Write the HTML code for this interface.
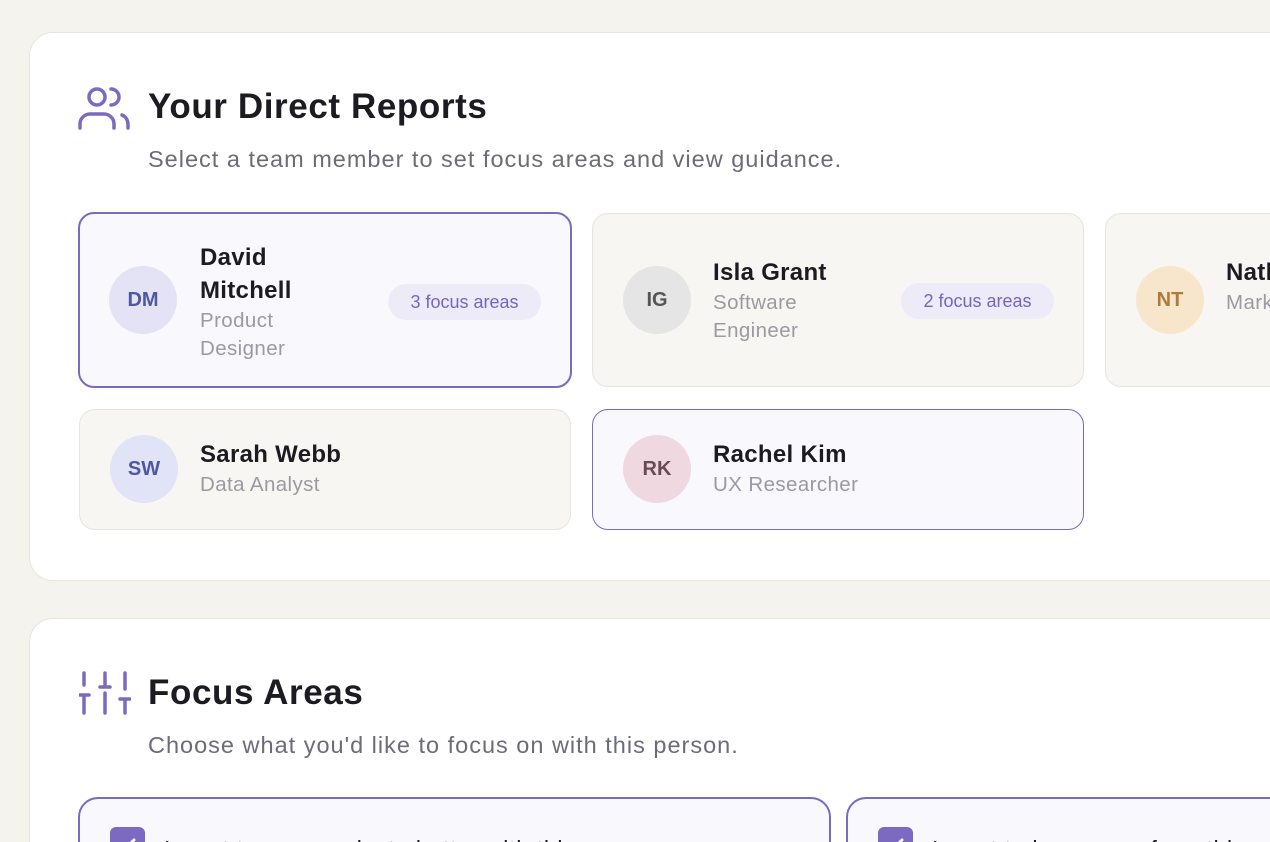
<!DOCTYPE html>
<html><head><meta charset="utf-8"><style>
*{box-sizing:border-box;margin:0;padding:0}
html,body{width:1270px;height:842px;overflow:hidden}
body{background:#f4f3ee;font-family:"Liberation Sans",sans-serif;position:relative;color:#1c1b22}
.card{position:absolute;left:29px;width:1300px;background:#fff;border:1px solid #e6e5df;border-radius:24px}
.h{position:absolute;left:148px;font-size:35px;font-weight:bold;letter-spacing:0.6px}
.sub{position:absolute;left:148px;font-size:23.5px;color:#6b6b7a;letter-spacing:1px}
.p{position:absolute;border-radius:16px;display:flex;align-items:center}
.av{position:absolute;left:30px;width:68px;height:68px;border-radius:50%;display:flex;align-items:center;justify-content:center;font-size:20px;font-weight:bold}
.nm{position:absolute;left:120px;font-size:24px;font-weight:bold;line-height:33px;letter-spacing:0.3px}
.rl{font-size:20.5px;font-weight:normal;color:#9b9aa3;line-height:28px;letter-spacing:0.4px}
.bd{position:absolute;height:36px;border-radius:18px;background:#eeebf8;color:#7565c0;font-size:18px;display:flex;align-items:center;justify-content:center}
.f{position:absolute;top:797px;height:80px;border:2px solid #7b6ac0;border-radius:20px;background:#f8f8fd}
.cb{position:absolute;left:30px;top:28px;width:35px;height:35px;border-radius:6px;background:#7b6ac0}
.ft{position:absolute;left:84px;top:37px;font-size:23px;white-space:nowrap;letter-spacing:0.7px}
</style></head><body>
<div class="card" style="top:32px;height:549px"></div>
<div class="card" style="top:618px;height:300px"></div>

<svg style="position:absolute;left:78px;top:86px" width="54" height="46" viewBox="0 0 54 46" fill="none" stroke="#7b6ac0" stroke-width="3.5" stroke-linecap="round">
<circle cx="19" cy="11" r="8"/><path d="M2 42v-4a10 10 0 0 1 10-10h14a10 10 0 0 1 10 10v4"/><path d="M33 3a8 8 0 0 1 0 16"/><path d="M44 29a10 10 0 0 1 6 9v4"/></svg>
<div class="h" style="top:87px">Your Direct Reports</div>
<div class="sub" style="top:146px">Select a team member to set focus areas and view guidance.</div>

<div class="p" style="left:78px;top:212px;width:494px;height:176px;background:#f8f8fd;border:2px solid #7b6ac0">
<div class="av" style="background:#e3e3f5;color:#4f56a3;left:29px">DM</div>
<div class="nm" style="top:27px">David<br>Mitchell<div class="rl">Product<br>Designer</div></div>
<div class="bd" style="left:308px;top:70px;width:153px">3 focus areas</div></div>

<div class="p" style="left:592px;top:213px;width:492px;height:174px;background:#f7f6f2;border:1px solid #e5e4df">
<div class="av" style="background:#e4e5e4;color:#555;">IG</div>
<div class="nm" style="top:42px">Isla Grant<div class="rl">Software<br>Engineer</div></div>
<div class="bd" style="left:308px;top:69px;width:153px">2 focus areas</div></div>

<div class="p" style="left:1105px;top:213px;width:300px;height:174px;background:#f7f6f2;border:1px solid #e5e4df">
<div class="av" style="background:#f8e6cc;color:#b07a3a;">NT</div>
<div class="nm" style="top:42px">Nathan<div class="rl">Marketing</div></div></div>

<div class="p" style="left:79px;top:409px;width:492px;height:121px;background:#f7f6f2;border:1px solid #e5e4df">
<div class="av" style="background:#e1e3f6;color:#4f56a3;top:25px">SW</div>
<div class="nm" style="top:28px">Sarah Webb<div class="rl">Data Analyst</div></div></div>

<div class="p" style="left:592px;top:409px;width:492px;height:121px;background:#f8f8fd;border:1px solid #7b6ac0">
<div class="av" style="background:#f0d8e0;color:#6a4a55;top:25px">RK</div>
<div class="nm" style="top:28px">Rachel Kim<div class="rl">UX Researcher</div></div></div>

<svg style="position:absolute;left:79px;top:671px" width="52" height="44" viewBox="0 0 52 44" fill="none" stroke="#7b6ac0" stroke-width="3.5" stroke-linecap="round">
<path d="M5 2v12M5 24v18M0 24h10M26 2v12M21 16h10M26 22v20M46 2v16M46 28v14M41 28h10"/></svg>
<div class="h" style="top:673px">Focus Areas</div>
<div class="sub" style="top:732px">Choose what you'd like to focus on with this person.</div>

<div class="f" style="left:78px;width:753px"><div class="cb"><svg width="35" height="35" viewBox="0 0 35 35" fill="none" stroke="#fff" stroke-width="3" stroke-linecap="round" stroke-linejoin="round"><path d="M11 18l4 4 9-9"/></svg></div><div class="ft">I want to communicate better with this person</div></div>
<div class="f" style="left:846px;width:500px"><div class="cb"><svg width="35" height="35" viewBox="0 0 35 35" fill="none" stroke="#fff" stroke-width="3" stroke-linecap="round" stroke-linejoin="round"><path d="M11 18l4 4 9-9"/></svg></div><div class="ft">I want to hear more from this person</div></div>
</body></html>
